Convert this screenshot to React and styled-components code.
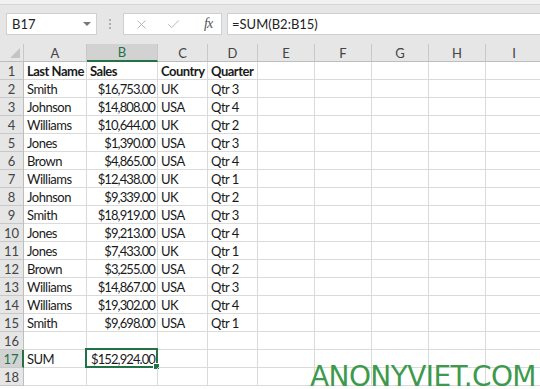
import React from "react";
import styled, { createGlobalStyle } from "styled-components";
import { X, Check } from "lucide-react";

const Global = createGlobalStyle`
  html, body { margin: 0; padding: 0; background: #ffffff; }
  body { overflow: hidden; }
`;

const Frame = styled.div`
  position: relative;
  width: 540px;
  height: 389px;
  overflow: hidden;
  background: #ffffff;
  font-family: Lato, "Liberation Sans", sans-serif;
`;

const TopStrip = styled.div`
  height: 4px;
  background: #f1f1f1;
  border-bottom: 1px solid #d6d6d6;
`;

const Toolbar = styled.div`
  height: 39px;
  box-sizing: border-box;
  background: #e6e6e6;
  display: flex;
  align-items: flex-start;
  padding: 8px 0 0 6px;
`;

const NameBox = styled.div`
  width: 91px;
  height: 22px;
  box-sizing: border-box;
  background: #fff;
  border: 1px solid #d0d0d0;
  display: flex;
  align-items: center;
  justify-content: space-between;
  padding: 0 5px 0 5px;
  font-size: 13px;
  color: #222;
`;

const Caret = styled.span`
  width: 0;
  height: 0;
  border-left: 4px solid transparent;
  border-right: 4px solid transparent;
  border-top: 4px solid #777;
`;

const Grip = styled.div`
  width: 26px;
  height: 22px;
  display: flex;
  flex-direction: column;
  align-items: center;
  justify-content: center;
  gap: 2px;
  & span {
    width: 2px;
    height: 2px;
    background: #b0b0b0;
  }
`;

const ButtonBox = styled.div`
  width: 99px;
  height: 22px;
  box-sizing: border-box;
  background: #fff;
  border: 1px solid #d0d0d0;
  display: flex;
  align-items: center;
  padding: 0 0 0 10px;
  gap: 17px;
  color: #a8a8a8;
`;

const Fx = styled.span`
  font-family: "Liberation Serif", serif;
  font-style: italic;
  font-size: 14px;
  color: #555;
  margin-left: 6px;
  letter-spacing: -1px;
`;

const FormulaInput = styled.div`
  flex: 1;
  margin-left: 5px;
  height: 22px;
  box-sizing: border-box;
  background: #fff;
  border: 1px solid #d0d0d0;
  border-right: none;
  display: flex;
  align-items: center;
  padding-left: 4px;
  font-size: 13px;
  color: #222;
`;

const Sheet = styled.div`
  display: grid;
  grid-template-columns: 24px 63px 71px 50px 50px 57px 57px 57px 57px 57px 57px;
  grid-auto-rows: 18px;
  font-size: 13px;
  color: #1a1a1a;
`;

const Corner = styled.div`
  box-sizing: border-box;
  background: #e6e6e6;
  border-right: 1px solid #c8c8c8;
  border-bottom: 1px solid #bdbdbd;
  position: relative;
  &::after {
    content: "";
    position: absolute;
    right: 3px;
    bottom: 3px;
    width: 0;
    height: 0;
    border-left: 10px solid transparent;
    border-bottom: 10px solid #c4c4c4;
  }
`;

const ColHead = styled.div`
  box-sizing: border-box;
  background: ${(p) => (p.$active ? "#d2d2d2" : "#e6e6e6")};
  color: ${(p) => (p.$active ? "#217346" : "#444")};
  border-right: 1px solid #c8c8c8;
  border-bottom: ${(p) => (p.$active ? "2px solid #217346" : "1px solid #bdbdbd")};
  display: flex;
  align-items: center;
  justify-content: center;
  font-size: 13px;
`;

const RowHead = styled.div`
  box-sizing: border-box;
  background: ${(p) => (p.$active ? "#d2d2d2" : "#e6e6e6")};
  color: ${(p) => (p.$active ? "#217346" : "#444")};
  border-right: ${(p) => (p.$active ? "2px solid #217346" : "1px solid #bdbdbd")};
  border-bottom: 1px solid #c8c8c8;
  display: flex;
  align-items: center;
  justify-content: center;
  font-size: 13px;
`;

const Cell = styled.div`
  position: relative;
  box-sizing: border-box;
  border-right: 1px solid #dadada;
  border-bottom: 1px solid #dadada;
  padding: 1px ${(p) => (p.$right ? "2px" : "3px")} 0;
  display: flex;
  align-items: center;
  justify-content: ${(p) => (p.$right ? "flex-end" : "flex-start")};
  font-weight: ${(p) => (p.$bold ? 700 : 400)};
  letter-spacing: ${(p) => (p.$right ? "-0.9px" : "-0.5px")};
  white-space: nowrap;
`;

const Selection = styled.div`
  position: absolute;
  left: -2px;
  top: -2px;
  right: -1px;
  bottom: -1px;
  border: 2px solid #217346;
  pointer-events: none;
  &::after {
    content: "";
    position: absolute;
    right: -4px;
    bottom: -4px;
    width: 5px;
    height: 5px;
    background: #217346;
    border: 1px solid #fff;
  }
`;

const Watermark = styled.div`
  position: absolute;
  left: 310px;
  top: 366px;
  font-family: "Comic Sans MS", "DejaVu Sans", sans-serif;
  font-size: 28px;
  line-height: 22px;
  letter-spacing: -0.6px;
  color: #3d9a4c;
  white-space: nowrap;
`;

const cols = ["A", "B", "C", "D", "E", "F", "G", "H", "I", ""];

const data = [
  ["Last Name", "Sales", "Country", "Quarter"],
  ["Smith", "$16,753.00", "UK", "Qtr 3"],
  ["Johnson", "$14,808.00", "USA", "Qtr 4"],
  ["Williams", "$10,644.00", "UK", "Qtr 2"],
  ["Jones", "$1,390.00", "USA", "Qtr 3"],
  ["Brown", "$4,865.00", "USA", "Qtr 4"],
  ["Williams", "$12,438.00", "UK", "Qtr 1"],
  ["Johnson", "$9,339.00", "UK", "Qtr 2"],
  ["Smith", "$18,919.00", "USA", "Qtr 3"],
  ["Jones", "$9,213.00", "USA", "Qtr 4"],
  ["Jones", "$7,433.00", "UK", "Qtr 1"],
  ["Brown", "$3,255.00", "USA", "Qtr 2"],
  ["Williams", "$14,867.00", "USA", "Qtr 3"],
  ["Williams", "$19,302.00", "UK", "Qtr 4"],
  ["Smith", "$9,698.00", "USA", "Qtr 1"],
  ["", "", "", ""],
  ["SUM", "$152,924.00", "", ""],
  ["", "", "", ""],
];

export default function App() {
  return (
    <Frame>
      <Global />
      <TopStrip />
      <Toolbar>
        <NameBox>
          B17
          <Caret />
        </NameBox>
        <Grip>
          <span />
          <span />
          <span />
        </Grip>
        <ButtonBox>
          <X size={15} strokeWidth={1.3} />
          <Check size={15} strokeWidth={1.3} />
          <Fx>fx</Fx>
        </ButtonBox>
        <FormulaInput>=SUM(B2:B15)</FormulaInput>
      </Toolbar>
      <Sheet>
        <Corner />
        {cols.map((c, i) => (
          <ColHead key={i} $active={c === "B"}>
            {c}
          </ColHead>
        ))}
        {data.map((row, r) => {
          const rowNum = r + 1;
          return (
            <React.Fragment key={r}>
              <RowHead $active={rowNum === 17}>{rowNum}</RowHead>
              {cols.map((c, ci) => {
                const v = row[ci] || "";
                const right = ci === 1 && r > 0;
                return (
                  <Cell key={ci} $right={right} $bold={r === 0}>
                    {v}
                    {rowNum === 17 && ci === 1 && <Selection />}
                  </Cell>
                );
              })}
            </React.Fragment>
          );
        })}
      </Sheet>
      <Watermark>ANONYVIET.COM</Watermark>
    </Frame>
  );
}
